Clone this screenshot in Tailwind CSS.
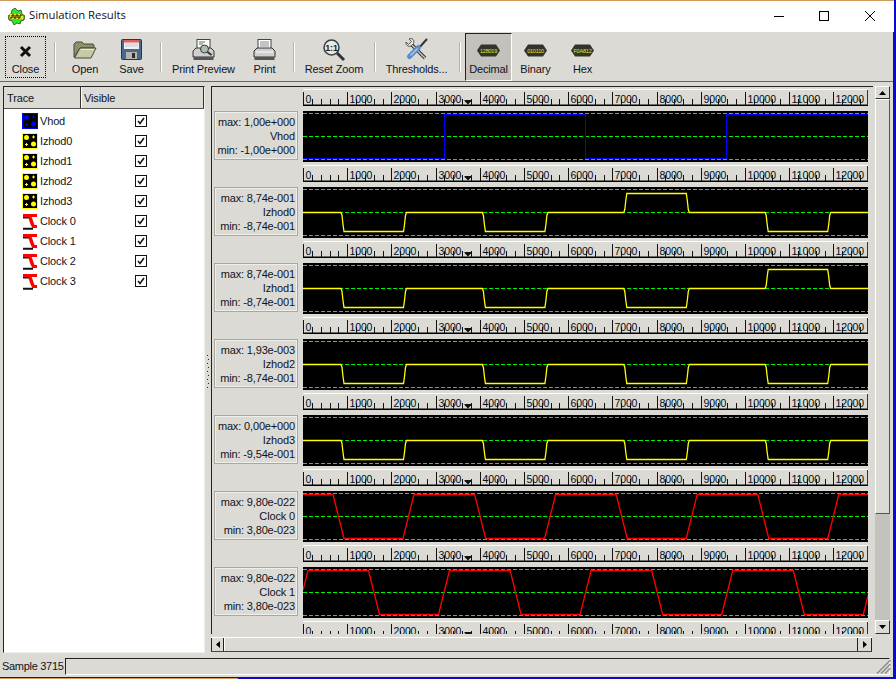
<!doctype html>
<html lang="en">
<head>
    <meta charset="UTF-8">
    <title>Simulation Results</title>
    <script src="https://cdn.jsdelivr.net/npm/@tailwindcss/browser@4"></script>
</head>
<body class="bg-[#0a0ac8] overflow-hidden">
<div class="relative w-[896px] h-[679px] flex flex-col pr-[2px] font-['Liberation_Sans',sans-serif] text-[11px] tracking-[-0.15px] text-[#10141c] bg-[#0a0ac8] overflow-hidden">
    <div class="h-[1px] shrink-0 bg-[#d09c5e]"></div>

    <!-- title bar -->
    <div class="relative h-[31px] shrink-0 bg-white flex items-center">
        <svg class="ml-[8px] w-[17px] h-[17px]" viewBox="0 0 17 17">
            <path d="M7 0l3 3 3-1 1 4 3 2-1 4-3 1-1 3-3-1-3 2-2-4-3-1-1-4 3-2 1-4z" fill="#2ee82e" stroke="#222" stroke-width=".7"/>
            <rect x="2" y="6" width="13" height="5" fill="#e8e820"/>
            <path d="M2 10h2V7h2v3h2V7h2v3h2V7h3" fill="none" stroke="#111" stroke-width="1"/>
        </svg>
        <span class="ml-[4px] -mt-[2px] text-[11.3px] tracking-normal text-[#101018] font-['Open_Sans',sans-serif]">Simulation Results</span>
        <svg class="absolute left-[773px] top-[9px] w-[12px] h-[12px]" viewBox="0 0 12 12"><path d="M1 6.500h10" stroke="#000"/></svg>
        <svg class="absolute left-[818px] top-[9px] w-[12px] h-[12px]" viewBox="0 0 12 12"><rect x="1.500" y="1.500" width="9" height="9" fill="none" stroke="#000"/></svg>
        <svg class="absolute left-[864px] top-[9px] w-[12px] h-[12px]" viewBox="0 0 12 12"><path d="M1 1l10 10M11 1L1 11" stroke="#000"/></svg>
    </div>

    <div class="flex-1 flex flex-col bg-[#dbdad5] border-r border-r-[#222]">
        <!-- toolbar -->
        <div class="h-[50px] shrink-0 flex items-start pl-[5px] pt-[1px] border-b border-b-[#666]">
            <div class="w-[41px] h-[42px] mt-[3px] border border-dotted border-black flex flex-col items-center">
                <svg class="mt-[8px] w-[13px] h-[13px]" viewBox="0 0 13 13"><path d="M2 2l9 9M11 2l-9 9" stroke="#111" stroke-width="3"/></svg>
                <span class="mt-[4px] leading-[14px]">Close</span>
            </div>
            <div class="w-[2px] h-[30px] mt-[9px] ml-[8px] bg-[#b4b3ae] border-r border-white"></div>

            <div class="w-[46px] h-[48px] ml-[6px] flex flex-col items-center">
                <div class="h-[29px] pt-[8px]"><svg class="block w-[24px] h-[18px]" viewBox="0 0 24 18">
                    <path d="M1 16V3l2-2h6l2 2h9l1 1v3H7L1 16z" fill="#8f8f6c" stroke="#4a4a38"/>
                    <path d="M1.500 17L7 7h16l-5 10z" fill="#c9c9a4" stroke="#4a4a38"/>
                    <path d="M8 8.500h13" stroke="#ececd4"/>
                </svg></div>
                <span class="leading-[14px]">Open</span>
            </div>
            <div class="w-[47px] h-[48px] flex flex-col items-center">
                <div class="h-[29px] pt-[6px]"><svg class="block w-[21px] h-[21px]" viewBox="0 0 21 21">
                    <rect x=".5" y=".5" width="20" height="20" rx="1" fill="#47688f" stroke="#2b3644"/>
                    <rect x="3" y="1" width="15" height="9" fill="#f0f0f0"/>
                    <rect x="3" y="1" width="15" height="2.500" fill="#d9605c"/>
                    <path d="M4 5h13M4 7h13" stroke="#c8c8c8"/>
                    <rect x="5" y="13" width="11" height="7" fill="#b5b5b0"/>
                    <rect x="11" y="14" width="3" height="5" fill="#2c2c2c"/>
                </svg></div>
                <span class="leading-[14px]">Save</span>
            </div>
            <div class="w-[2px] h-[30px] mt-[9px] ml-[5px] bg-[#b4b3ae] border-r border-white"></div>

            <div class="w-[71px] h-[48px] ml-[6px] flex flex-col items-center">
                <div class="h-[29px] pt-[6px]"><svg class="block w-[23px] h-[22px]" viewBox="0 0 23 22">
                    <rect x="5" y=".5" width="13" height="11" fill="#fff" stroke="#444"/>
                    <path d="M7 3h6M7 5h4" stroke="#666"/>
                    <path d="M1 12l3-3h15l3 3v6H1z" fill="#cfcfcf" stroke="#333"/>
                    <rect x="1.500" y="18" width="20" height="3" fill="#555"/>
                    <circle cx="12.500" cy="10" r="4" fill="#aebcae" stroke="#3a3a3a"/>
                    <path d="M15.500 13l4 3" stroke="#333" stroke-width="2"/>
                </svg></div>
                <span class="leading-[14px]">Print Preview</span>
            </div>
            <div class="w-[51px] h-[48px] flex flex-col items-center">
                <div class="h-[29px] pt-[6px]"><svg class="block w-[23px] h-[22px]" viewBox="0 0 23 22">
                    <rect x="5" y=".5" width="13" height="11" fill="#fff" stroke="#444"/>
                    <path d="M7 3h9M7 5h9M7 7h9" stroke="#888"/>
                    <path d="M1 12l3-3h15l3 3v6H1z" fill="#cfcfcf" stroke="#333"/>
                    <path d="M3 13h17" stroke="#fff"/>
                    <rect x="1.500" y="18" width="20" height="3" fill="#555"/>
                </svg></div>
                <span class="leading-[14px]">Print</span>
            </div>
            <div class="w-[2px] h-[30px] mt-[9px] ml-[3px] bg-[#b4b3ae] border-r border-white"></div>

            <div class="w-[68px] h-[48px] ml-[5px] flex flex-col items-center">
                <div class="h-[29px] pt-[6px]"><svg class="block w-[23px] h-[23px]" viewBox="0 0 23 23">
                    <path d="M14 14l7 7" stroke="#333" stroke-width="3"/>
                    <circle cx="8.500" cy="8.500" r="7.500" fill="#e8e8e4" stroke="#3c3c3c" stroke-width="1.500"/>
                    <text x="8.500" y="12" text-anchor="middle" font-size="9" font-weight="700" fill="#222">1:1</text>
                </svg></div>
                <span class="leading-[14px]">Reset Zoom</span>
            </div>
            <div class="w-[2px] h-[30px] mt-[9px] ml-[6px] bg-[#b4b3ae] border-r border-white"></div>

            <div class="w-[71px] h-[48px] ml-[5px] flex flex-col items-center">
                <div class="h-[29px] pt-[5px]"><svg class="block w-[23px] h-[23px]" viewBox="0 0 23 23">
                    <path d="M5 5l15 15" stroke="#333" stroke-width="3.500"/>
                    <path d="M5 5l15 15" stroke="#c8c8c8" stroke-width="1.500"/>
                    <path d="M1 4l2.500 2.500L6.500 3.500 4 1c3-1.500 6 1 4.500 4.500L6 8C3 9 .5 7 1 4z" fill="#e8e8e8" stroke="#333" stroke-width=".8"/>
                    <path d="M22 1l-9 10" stroke="#333" stroke-width="2"/>
                    <path d="M13.500 9.500l-9 9" stroke="#5b8fc4" stroke-width="5" stroke-linecap="round"/>
                    <path d="M12.500 10.500l-7 7" stroke="#a9cbe8" stroke-width="1.500"/>
                </svg></div>
                <span class="leading-[14px]">Thresholds...</span>
            </div>
            <div class="w-[2px] h-[30px] mt-[9px] ml-[7px] bg-[#b4b3ae] border-r border-white"></div>

            <div class="w-[47px] h-[48px] ml-[4px] flex flex-col items-center bg-[#c2c1bc] border border-t-[#222] border-l-[#222] border-r-white border-b-white">
                <div class="h-[28px] pt-[10px]"><svg class="block w-[23px] h-[13px]" viewBox="0 0 23 13">
                    <path d="M4 .5h15l4 6-4 6H4l-4-6z" fill="#33332e"/>
                    <text x="11.500" y="8.500" text-anchor="middle" font-size="5.500" fill="#e8e820" letter-spacing="-.2">128019</text>
                </svg></div>
                <span class="leading-[14px]">Decimal</span>
            </div>
            <div class="w-[47px] h-[48px] flex flex-col items-center">
                <div class="h-[29px] pt-[11px]"><svg class="block w-[23px] h-[13px]" viewBox="0 0 23 13">
                    <path d="M4 .5h15l4 6-4 6H4l-4-6z" fill="#33332e"/>
                    <text x="11.500" y="8.500" text-anchor="middle" font-size="5.500" fill="#e8e820" letter-spacing="-.2">010110</text>
                </svg></div>
                <span class="leading-[14px]">Binary</span>
            </div>
            <div class="w-[47px] h-[48px] flex flex-col items-center">
                <div class="h-[29px] pt-[11px]"><svg class="block w-[23px] h-[13px]" viewBox="0 0 23 13">
                    <path d="M4 .5h15l4 6-4 6H4l-4-6z" fill="#33332e"/>
                    <text x="11.500" y="8.500" text-anchor="middle" font-size="5.500" fill="#e8e820" letter-spacing="-.2">F0A812</text>
                </svg></div>
                <span class="leading-[14px]">Hex</span>
            </div>
        </div>

        <!-- main -->
        <div class="h-[574px] shrink-0 flex pl-[3px] pt-[4px]">
            <!-- trace list -->
            <div class="w-[202px] h-[567px] flex flex-col bg-white border-l border-t border-l-[#222] border-t-[#222] border-r border-b border-r-[#eeeeea] border-b-[#eeeeea]">
                <div class="h-[22px] shrink-0 flex bg-[#dbdad5] border-b border-b-[#555]">
                    <div class="w-[77px] pl-[3px] leading-[22px] border-r border-r-[#333]">Trace</div>
                    <div class="flex-1 pl-[2px] leading-[22px] border-l border-l-white border-r border-r-[#333]">Visible</div>
                </div>
                <div id="traces" class="pt-[2px]"></div>
            </div>

            <!-- splitter -->
            <div class="relative w-[6px] h-[567px]">
                <svg class="absolute left-0 top-[268px] w-[6px] h-[36px]" viewBox="0 0 6 36">
                    <path d="M2 1.500h1M3 5.500h1M2 9.500h1M3 13.500h1M2 17.500h1M3 21.500h1M2 25.500h1M3 29.500h1M2 33.500h1" stroke="#222"/>
                </svg>
            </div>

            <!-- plots -->
            <div class="w-[679px] flex flex-col">
                <div class="flex h-[549px]">
                    <div id="rows" class="w-[662px] h-[548px] overflow-hidden border-l border-t border-l-[#222] border-t-[#222] pt-[2px]"></div>
                    <div class="ml-[2px] w-[15px] h-[548px] flex flex-col">
                        <div class="h-[13px] flex items-center justify-center border border-t-white border-l-white border-r-[#333] border-b-[#333]">
                            <svg class="w-[7px] h-[4px]" viewBox="0 0 7 4"><path d="M3.500 0L7 4H0z" fill="#000"/></svg>
                        </div>
                        <div class="h-[415px] border border-t-white border-l-white border-r-[#555] border-b-[#555]"></div>
                        <div class="flex-1 bg-[#c3c2bd]"></div>
                        <div class="h-[14px] flex items-center justify-center border border-t-white border-l-white border-r-[#333] border-b-[#333]">
                            <svg class="w-[7px] h-[4px]" viewBox="0 0 7 4"><path d="M0 0h7L3.500 4z" fill="#000"/></svg>
                        </div>
                    </div>
                </div>
                <div class="mt-[2px] w-[661px] h-[15px] flex border-t border-t-white border-b border-b-[#444]">
                    <div class="w-[13px] flex items-center justify-center border-l border-l-[#222] border-r border-r-[#222]">
                        <svg class="w-[4px] h-[7px]" viewBox="0 0 4 7"><path d="M4 0v7L0 3.500z" fill="#000"/></svg>
                    </div>
                    <div class="flex-1 border-l border-l-white"></div>
                    <div class="w-[15px] flex items-center justify-center border-l border-l-[#222] border-r border-r-[#222]">
                        <svg class="w-[4px] h-[7px]" viewBox="0 0 4 7"><path d="M0 0l4 3.500L0 7z" fill="#000"/></svg>
                    </div>
                </div>
            </div>
        </div>

        <!-- status bar -->
        <div class="relative h-[21px] shrink-0 flex pl-[2px] pt-[2px] leading-[17px]">
            <span class="w-[63px] tracking-[-0.3px]">Sample 3715</span>
            <div class="w-[825px] h-[17px] border border-t-[#222] border-l-[#222] border-r-white border-b-white"></div>
            <svg class="absolute left-[875px] top-[2px] w-[16px] h-[16px]" viewBox="0 0 16 16">
                <path d="M2 15.500L15.500 2M6 15.500L15.500 6M10 15.500L15.500 10" stroke="#8e8d89" stroke-width="1.500"/>
            </svg>
        </div>
    </div>

    <div class="h-[1px] shrink-0 bg-[#222]"></div>
    <div class="h-[1px] shrink-0 flex"><div class="w-[238px] bg-[#d09c5e]"></div></div>
</div>

<script>
    const traces = [
        { name: 'Vhod', color: '#0000ff', max: '1,00e+000', min: '-1,00e+000', kind: 'dots' },
        { name: 'Izhod0', color: '#ffff00', max: '8,74e-001', min: '-8,74e-001', kind: 'dots' },
        { name: 'Izhod1', color: '#ffff00', max: '8,74e-001', min: '-8,74e-001', kind: 'dots' },
        { name: 'Izhod2', color: '#ffff00', max: '1,93e-003', min: '-8,74e-001', kind: 'dots' },
        { name: 'Izhod3', color: '#ffff00', max: '0,00e+000', min: '-9,54e-001', kind: 'dots' },
        { name: 'Clock 0', color: '#ff0000', max: '9,80e-022', min: '3,80e-023', kind: 'clock' },
        { name: 'Clock 1', color: '#ff0000', max: '9,80e-022', min: '3,80e-023', kind: 'clock' },
        { name: 'Clock 2', color: '#ff0000', max: '', min: '', kind: 'clock' },
        { name: 'Clock 3', color: '#ff0000', max: '', min: '', kind: 'clock' },
    ];

    function traceIcon(t) {
        if (t.kind === 'clock') {
            return `<svg class="block w-[16px] h-[17px]" viewBox="0 0 16 17">
                <path d="M1 4.500h7M1 15.800h10" stroke="#111" stroke-width="2"/>
                <path d="M1 2.500h14M10 13.500h5" stroke="#ff0000" stroke-width="3"/>
                <path d="M7.500 3l3.500 10" stroke="#ff0000" stroke-width="3.500"/>
            </svg>`;
        }
        return `<svg class="block w-[16px] h-[16px]" viewBox="0 0 16 16">
            <rect x=".5" y=".5" width="15" height="15" fill="#000" stroke="${t.color}"/>
            <circle cx="4.500" cy="4.500" r="2.500" fill="${t.color}"/>
            <circle cx="11.500" cy="11" r="2.500" fill="${t.color}"/>
            <path d="M10 4h3M11.500 2.500v3M3 11.500h3M4.500 10v3" stroke="${t.color}"/>
        </svg>`;
    }

    document.getElementById('traces').innerHTML = traces.map(t => `
        <div class="h-[20px] flex items-center pl-[18px]">
            <div class="w-[16px] h-[17px] flex items-center">${traceIcon(t)}</div>
            <span class="ml-[2px] w-[95px]">${t.name}</span>
            <svg class="w-[12px] h-[12px]" viewBox="0 0 12 12">
                <rect x=".5" y=".5" width="11" height="11" fill="#fff" stroke="#111"/>
                <path d="M3 6l2 2.500L9 3" fill="none" stroke="#111" stroke-width="1.500"/>
            </svg>
        </div>`).join('');

    function ruler() {
        let s = '';
        for (let i = 0; i < 64; i++) {
            const x = Math.round(i * 8.84) + 0.5;
            if (x > 564) break;
            if (i % 5 === 0) {
                s += `<path d="M${x} 3V16" stroke="#111"/>`;
                const label = String(i * 200);
                s += `<text x="${x + 2}" y="14" font-size="11.5" fill="#000a20" textLength="${label.length * 5.7}" lengthAdjust="spacingAndGlyphs">${label}</text>`;
            } else {
                s += `<path d="M${x} 10V16" stroke="#111"/>`;
            }
        }
        return `<svg class="block w-[565px] h-[17px]" viewBox="0 0 565 17">
            <rect width="565" height="1" fill="#fff"/>
            <rect y="15.500" width="565" height="1.500" fill="#000"/>
            <path d="M564.500 1V16" stroke="#333"/>
            ${s}
            <path d="M161.500 11h7v1l-3.500 3.500-3.500-3.500z" fill="#111"/>
        </svg>`;
    }

    // yellow outputs: one pulse per period, -1 goes low and 1 goes high
    function pulses(signs) {
        const mid = 25.5, amp = 19;
        const pts = ['0,' + mid];
        signs.forEach((s, k) => {
            const x = 38 + 141.4 * k;
            const y = mid + -s * amp;
            const d = -s;
            pts.push(`${x},${mid}`, `${x + 1},${mid + d * 3}`, `${x + 2},${mid + d * 12}`, `${x + 3},${y}`);
            pts.push(`${x + 62.500},${y}`, `${x + 63.500},${mid + d * 12}`, `${x + 64.500},${mid + d * 3}`, `${x + 65.500},${mid}`);
        });
        pts.push('565,' + mid);
        return pts.join(' ');
    }

    function clock(firstFall, firstRise, startPts) {
        const hi = 3.5, lo = 47.5;
        const events = [];
        for (let k = 0; k < 4; k++) {
            events.push([firstFall + 141.6 * k, hi, lo]);
            events.push([firstRise + 141.6 * k, lo, hi]);
        }
        const pts = [startPts];
        events.sort((a, b) => a[0] - b[0]).forEach(e => pts.push(`${e[0]},${e[1]}`, `${e[0] + 11},${e[2]}`));
        pts.push('575,' + hi);
        return pts.join(' ');
    }

    const waves = [
        { color: '#0000ff', crisp: true, pts: '0,47.500 141.500,47.500 141.500,3.500 282.500,3.500 282.500,47.500 423.500,47.500 423.500,3.500 565,3.500' },
        { color: '#ffff00', pts: pulses([-1, -1, 1, -1]) },
        { color: '#ffff00', pts: pulses([-1, -1, -1, 1]) },
        { color: '#ffff00', pts: pulses([-1, -1, -1, -1]) },
        { color: '#ffff00', pts: pulses([-1, -1, -1, -1]) },
        { color: '#ff0000', pts: clock(30, 100, '0,3.500') },
        { color: '#ff0000', pts: clock(65.5, 135.5, '0,23 5,3.500') },
        { color: '#ff0000', pts: '' },
    ];

    function plot(w) {
        const line = w.crisp ? 'stroke-width="1" shape-rendering="crispEdges"' : 'stroke-width="1.300"';
        return `<svg class="block w-[565px] h-[51px] bg-black" viewBox="0 0 565 51">
            <path d="M0 2.500H565M0 25.500H565M0 48.500H565" stroke="#00f000" stroke-dasharray="4 2"/>
            <polyline points="${w.pts}" fill="none" stroke="${w.color}" ${line}/>
        </svg>`;
    }

    document.getElementById('rows').innerHTML = waves.map((w, i) => `
        <div class="h-[76px] flex">
            <div class="ml-[2px] w-[84px] h-[49px] mt-[22px] shrink-0 border border-[#a8a7a2] shadow-[inset_0_0_0_1px_#eeeeea] pr-[2px] text-right leading-[14px] py-[3px]">
                ${traces[i].max ? `<div>max: ${traces[i].max}</div><div>${traces[i].name}</div><div>min: ${traces[i].min}</div>` : ''}
            </div>
            <div class="ml-[5px] w-[565px] shrink-0">
                ${ruler()}
                <div class="h-[5px]"></div>
                ${plot(w)}
            </div>
        </div>`).join('');
</script>
</body>
</html>
